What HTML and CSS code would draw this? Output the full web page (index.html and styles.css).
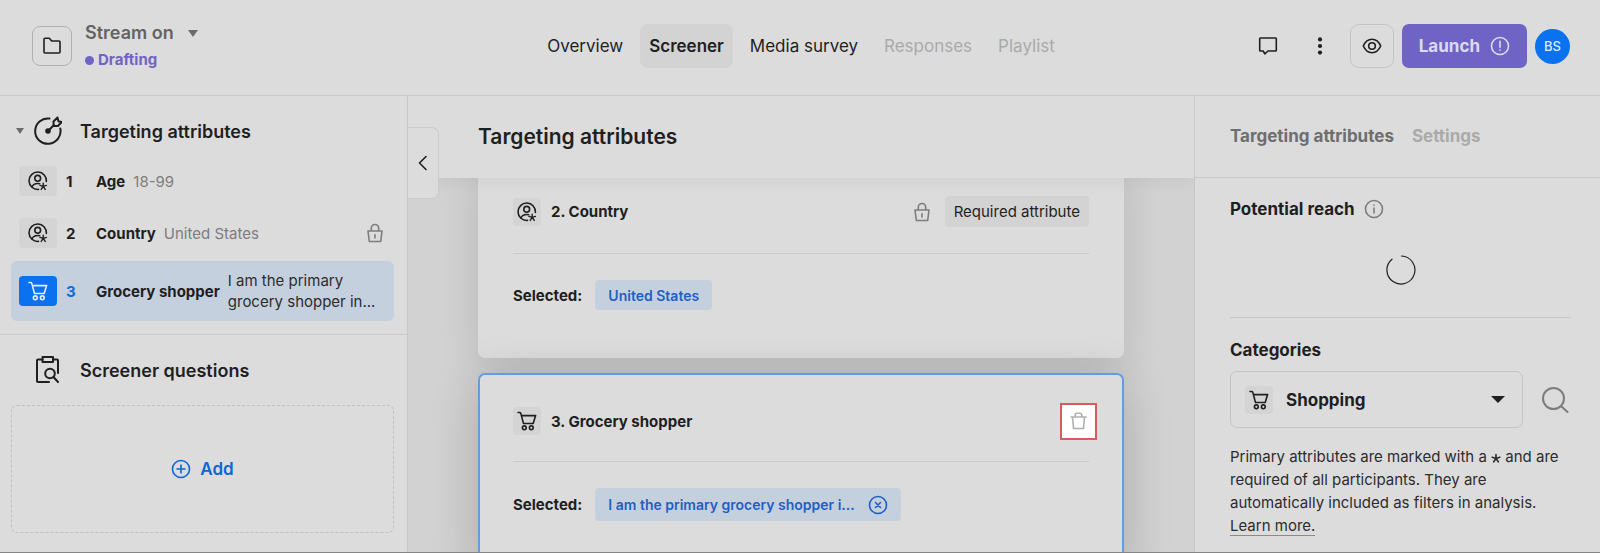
FILE: index.html
```html
<!DOCTYPE html>
<html lang="en">
<head>
    <meta charset="UTF-8">
    <meta name="viewport" content="width=device-width, initial-scale=1.0">
    <title>Stream on - Screener</title>
    <link rel="stylesheet" href="styles.css">
</head>
<body>
    <!-- icons used more than once -->
    <svg class="sprite" aria-hidden="true">
        <symbol id="icon-person" viewBox="0 0 20 20">
            <path d="M18.400 10.500A8.700 8.700 0 1 0 10.500 18.400"/>
            <circle cx="9.700" cy="7.300" r="2.900"/>
            <path d="M4 15.800c1-2.300 3-3.300 5.700-3.300.8 0 1.400.1 2 .3"/>
            <path class="thin" d="M15.200 15.400v-3.200M15.200 15.400l3.200-1M15.200 15.400l2 3M15.200 15.400l-2 3M15.200 15.400l-3.200-1"/>
        </symbol>
        <symbol id="icon-cart" viewBox="0 0 20 20">
            <path d="M1 1.500h1.600c.6 0 1 .3 1.200.9l2.700 10.100h9.700l2.400-7.900H4.400"/>
            <circle cx="7.300" cy="16.800" r="1.900"/>
            <circle cx="14.300" cy="16.800" r="1.900"/>
        </symbol>
        <symbol id="icon-lock" viewBox="0 0 18 20">
            <path d="M2 8h14l-1.300 10.500H3.300zM5.300 8V5.200a3.700 3.700 0 0 1 7.400 0V8M9 11.800v3.200"/>
        </symbol>
    </svg>

    <div class="app">
        <header class="topbar">
            <div class="project">
                <button class="folder-btn" aria-label="Projects">
                    <svg width="20" height="20" viewBox="0 0 20 20"><path d="M2 3.200q0-1 1-1h4.300l2.400 2.800H17q1 0 1 1v10q0 1-1 1H3q-1 0-1-1z"/></svg>
                </button>
                <div>
                    <button class="project-name">Stream on <span class="caret"></span></button>
                    <div class="project-status">Drafting</div>
                </div>
            </div>

            <nav class="tabs">
                <a href="#overview">Overview</a>
                <a href="#screener" class="active">Screener</a>
                <a href="#survey">Media survey</a>
                <a href="#responses" class="disabled">Responses</a>
                <a href="#playlist" class="disabled">Playlist</a>
            </nav>

            <div class="actions">
                <button class="icon-btn" aria-label="Comments">
                    <svg width="20" height="20" viewBox="0 0 20 20"><path d="M2.500 2h15q.8 0 .8.800v11.400q0 .8-.8.800H10l-3.200 2.800L5.200 15H2.500q-.8 0-.8-.8V2.800q0-.8.800-.8z"/></svg>
                </button>
                <button class="icon-btn" aria-label="More">
                    <svg class="solid" width="20" height="20" viewBox="0 0 20 20"><circle cx="10" cy="3.400" r="2.100"/><circle cx="10" cy="10" r="2.100"/><circle cx="10" cy="16.600" r="2.100"/></svg>
                </button>
                <button class="icon-btn outlined" aria-label="Preview">
                    <svg width="20" height="20" viewBox="0 0 20 20"><path d="M1.300 10C3.200 5.700 6.200 3.300 10 3.300s6.800 2.400 8.700 6.700c-1.900 4.300-4.900 6.700-8.700 6.700S3.200 14.300 1.300 10z"/><circle cx="10" cy="10" r="3.300"/></svg>
                </button>
                <button class="launch-btn">
                    Launch
                    <svg width="20" height="20" viewBox="0 0 20 20"><circle cx="10" cy="10" r="8.500"/><path d="M10 5.200v6M10 14v.3"/></svg>
                </button>
                <button class="avatar">BS</button>
            </div>
        </header>

        <aside class="sidebar">
            <section class="group">
                <h2 class="group-title">
                    <span class="caret small"></span>
                    <svg width="28" height="30" viewBox="0 0 28 30">
                        <path d="M15.500 2.500A12.700 12.700 0 1 0 26.300 12.500"/>
                        <circle class="dot" cx="14" cy="15" r="1.800"/>
                        <path d="M14 15l6-6M19.500 9.800V5.500L23.500 1.500l.9 3.700 3.400.8-3.900 4z"/>
                    </svg>
                    Targeting attributes
                </h2>
                <ul class="attributes">
                    <li class="attribute">
                        <span class="badge"><svg width="20" height="20"><use href="#icon-person"/></svg></span>
                        <span class="number">1</span>
                        <span class="name">Age</span>
                        <span class="value">18-99</span>
                    </li>
                    <li class="attribute">
                        <span class="badge"><svg width="20" height="20"><use href="#icon-person"/></svg></span>
                        <span class="number">2</span>
                        <span class="name">Country</span>
                        <span class="value">United States</span>
                        <svg class="lock" width="18" height="20"><use href="#icon-lock"/></svg>
                    </li>
                    <li class="attribute selected">
                        <span class="badge"><svg width="20" height="20"><use href="#icon-cart"/></svg></span>
                        <span class="number">3</span>
                        <span class="name">Grocery shopper</span>
                        <span class="value">I am the primary grocery shopper in...</span>
                    </li>
                </ul>
            </section>

            <section class="group">
                <h2 class="group-title">
                    <span class="caret small hidden"></span>
                    <svg width="28" height="30" viewBox="0 0 28 30">
                        <path d="M8.500 4.500H4q-1 0-1 1V26q0 1 1 1h11M19 4.500h4q1 0 1 1V18"/>
                        <path d="M8.500 2h10.500v5H8.500z"/>
                        <circle cx="16" cy="18.500" r="4.800"/>
                        <path d="M19.500 22l4.500 5"/>
                    </svg>
                    Screener questions
                </h2>
                <button class="add-btn">
                    <svg width="20" height="20" viewBox="0 0 20 20"><circle cx="10" cy="10" r="8.500"/><path d="M10 6v8M6 10h8"/></svg>
                    Add
                </button>
            </section>
        </aside>

        <main class="content">
            <button class="collapse-btn" aria-label="Collapse sidebar">
                <svg width="12" height="18" viewBox="0 0 12 18"><path d="M9 2.500L2.500 9 9 15.500"/></svg>
            </button>
            <h1 class="content-title">Targeting attributes</h1>

            <div class="cards">
                <article class="card">
                    <div class="card-header">
                        <span class="badge square"><svg width="20" height="20"><use href="#icon-person"/></svg></span>
                        <h3>2. Country</h3>
                        <svg class="lock" width="18" height="20"><use href="#icon-lock"/></svg>
                        <span class="tag">Required attribute</span>
                    </div>
                    <div class="card-body">
                        <span class="label">Selected:</span>
                        <span class="chip">United States</span>
                    </div>
                </article>

                <article class="card current">
                    <div class="card-header">
                        <span class="badge square"><svg width="20" height="20"><use href="#icon-cart"/></svg></span>
                        <h3>3. Grocery shopper</h3>
                        <button class="delete-btn" aria-label="Delete attribute">
                            <svg width="17" height="20" viewBox="0 0 17 20"><path d="M1 6h15M2.500 6l1 11.500h10l1-11.500M5 5.500q0-3.200 2-3.200h3q2 0 2 3.200"/></svg>
                        </button>
                    </div>
                    <div class="card-body">
                        <span class="label">Selected:</span>
                        <span class="chip removable">
                            I am the primary grocery shopper i...
                            <button class="remove-btn" aria-label="Remove">
                                <svg width="20" height="20" viewBox="0 0 20 20"><circle cx="10" cy="10" r="8.500"/><path d="M7.500 7.500l5 5M12.500 7.500l-5 5"/></svg>
                            </button>
                        </span>
                    </div>
                </article>
            </div>
        </main>

        <aside class="panel">
            <nav class="panel-tabs">
                <a href="#attributes" class="active">Targeting attributes</a>
                <a href="#settings">Settings</a>
            </nav>

            <section class="reach">
                <h2>
                    Potential reach
                    <svg width="20" height="20" viewBox="0 0 20 20"><circle cx="10" cy="10" r="8.500"/><path d="M10 9v5M10 6v.2"/></svg>
                </h2>
                <svg class="spinner" width="30" height="30" viewBox="0 0 30 30"><path d="M15.500 1A14 14 0 1 1 6 4.200"/></svg>
            </section>

            <section class="categories">
                <label for="category">Categories</label>
                <div class="category-row">
                    <div class="select-box">
                        <span class="badge square"><svg width="20" height="20"><use href="#icon-cart"/></svg></span>
                        <select id="category">
                            <option>Shopping</option>
                        </select>
                        <span class="caret dark"></span>
                    </div>
                    <button class="search-btn" aria-label="Search categories">
                        <svg width="28" height="28" viewBox="0 0 28 28"><circle cx="12.500" cy="12.500" r="10.500"/><path d="M20 20l6.500 6"/></svg>
                    </button>
                </div>
                <p>
                    Primary attributes are marked with a
                    <svg class="star" width="10" height="10" viewBox="0 0 10 10" role="img" aria-label="star"><path d="M5 5.500V1.500M5 5.500l3.800-1.200M5 5.500l2.300 3.300M5 5.500L2.700 8.800M5 5.500L1.200 4.300"/></svg>
                    and are required of all participants. They are automatically included as filters in analysis.
                    <a href="#learn">Learn more.</a>
                </p>
            </section>
        </aside>
    </div>
</body>
</html>
```

FILE: styles.css
```css
* {
    box-sizing: border-box;
    margin: 0;
    padding: 0;
}

body {
    font-family: Inter, "Liberation Sans", sans-serif;
    font-size: 15px;
    color: #1f1f1f;
    background-color: #dcdcdc;
}

button, select {
    font: inherit;
    color: inherit;
    background: none;
    border: none;
    cursor: pointer;
}

a {
    color: inherit;
    text-decoration: none;
}

svg {
    flex-shrink: 0;
    fill: none;
    stroke: currentColor;
    stroke-width: 1.6;
    stroke-linecap: round;
    stroke-linejoin: round;
}

.thin {
    stroke-width: 1.4;
}

.sprite {
    position: absolute;
    width: 0;
    height: 0;
}

.app {
    display: grid;
    grid-template-columns: 407px 1fr 406px;
    grid-template-rows: auto 1fr;
    height: 100vh;
    overflow: hidden;
    border-bottom: 1px solid #858585;
}

.caret {
    display: inline-block;
    border: 5px solid transparent;
    border-top: 7px solid #6b6b6b;
    border-bottom: 0;
}

.caret.small {
    border-width: 6px 4px 0;
}

.caret.dark {
    border-width: 7px 7px 0;
    border-top-color: #1f1f1f;
}

.caret.hidden {
    visibility: hidden;
}

/* Top bar */
.topbar {
    grid-column: 1 / -1;
    display: grid;
    grid-template-columns: 1fr auto 1fr;
    align-items: center;
    padding: 19px 30px 22px 32px;
    border-bottom: 1px solid #c8c8c8;
}

.project {
    display: flex;
    align-items: center;
    gap: 13px;
}

.folder-btn {
    display: grid;
    place-items: center;
    width: 40px;
    height: 40px;
    border: 1px solid #b0b0b0;
    border-radius: 8px;
}

.project-name {
    display: flex;
    align-items: center;
    gap: 14px;
    font-size: 18px;
    font-weight: 600;
    line-height: 28px;
    color: #636363;
}

.project-status {
    display: flex;
    align-items: center;
    gap: 4px;
    font-weight: 700;
    line-height: 26px;
    color: #6f63c6;
}

.project-status::before {
    content: "";
    width: 9px;
    height: 9px;
    border-radius: 50%;
    background-color: #6f63c6;
}

.tabs {
    display: flex;
    gap: 8px;
    font-size: 17px;
    line-height: 44px;
}

.tabs a {
    padding: 0 9px;
    border-radius: 8px;
}

.tabs .active {
    font-weight: 600;
    background-color: #d3d3d3;
}

.tabs .disabled {
    color: #aaaaaa;
}

.actions {
    display: flex;
    align-items: center;
    justify-content: flex-end;
    gap: 8px;
}

.icon-btn {
    display: grid;
    place-items: center;
    width: 44px;
    height: 44px;
}

.icon-btn.outlined {
    border: 1px solid #c4c4c4;
    border-radius: 9px;
}

.solid {
    fill: currentColor;
    stroke: none;
}

.launch-btn {
    display: flex;
    align-items: center;
    gap: 10px;
    height: 44px;
    padding: 0 17px;
    border-radius: 7px;
    font-size: 17px;
    font-weight: 700;
    color: #dcdaf0;
    background-color: #6f63c6;
}

.avatar {
    width: 35px;
    height: 35px;
    border-radius: 50%;
    font-size: 13px;
    font-weight: 500;
    color: #dcebff;
    background-color: #0a72ef;
}

/* Sidebar */
.group {
    padding: 17px 13px 13px 11px;
    border-bottom: 1px solid #cbcbcb;
}

.group:last-child {
    border-bottom: none;
}

.group-title {
    display: flex;
    align-items: center;
    gap: 10px;
    height: 36px;
    margin-bottom: 8px;
    padding-left: 5px;
    font-size: 18px;
    font-weight: 600;
}

.group-title svg {
    stroke-width: 2;
    margin-right: 8px;
}

.group-title .dot {
    fill: currentColor;
}

.attributes {
    display: grid;
    gap: 4px;
    list-style: none;
}

.attribute {
    display: flex;
    align-items: center;
    min-height: 48px;
    padding: 0 8px;
    border-radius: 6px;
}

.badge {
    display: grid;
    flex-shrink: 0;
    place-items: center;
    width: 38px;
    height: 30px;
    border-radius: 4px;
    background-color: #d4d4d4;
}

.badge.square {
    width: 28px;
    height: 28px;
}

.number {
    flex-shrink: 0;
    width: 30px;
    margin-left: 9px;
    font-weight: 700;
}

.name {
    flex-shrink: 0;
    margin-right: 8px;
    font-weight: 700;
}

.value {
    flex: 1;
    line-height: 21px;
    color: #7d7d7d;
}

.lock {
    color: #7d7d7d;
    margin-right: 2px;
}

.attribute.selected {
    min-height: 60px;
    background-color: #c5d0df;
}

.selected .badge {
    color: #e2edfc;
    background-color: #0a72ef;
}

.selected .number {
    color: #0a6be0;
}

.selected .value {
    color: #2c2c2c;
}

.add-btn {
    display: flex;
    align-items: center;
    justify-content: center;
    gap: 9px;
    width: 100%;
    height: 128px;
    margin-top: 17px;
    border: 1px dashed #c0c0c0;
    border-radius: 6px;
    font-size: 17px;
    font-weight: 600;
    color: #0b66d8;
}

/* Content */
.content {
    position: relative;
    min-height: 0;
    overflow: hidden;
    border-left: 1px solid #c8c8c8;
    background-color: #d2d2d2;
}

.collapse-btn {
    position: absolute;
    z-index: 2;
    top: 31px;
    left: 0;
    display: grid;
    place-items: center;
    width: 31px;
    height: 72px;
    border: 1px solid #cbcbcb;
    border-left: none;
    border-radius: 0 7px 7px 0;
    background-color: #dcdcdc;
}

.content-title {
    position: relative;
    z-index: 1;
    padding: 0 70px;
    font-size: 21px;
    font-weight: 600;
    line-height: 82px;
    background-color: #dcdcdc;
    box-shadow: 0 4px 16px rgba(0, 0, 0, 0.06);
}

/* the list is scrolled a little under the title */
.cards {
    display: grid;
    gap: 15px;
    margin-top: -16px;
    padding: 0 70px;
}

.card {
    padding: 0 33px 20px;
    border: 2px solid transparent;
    border-radius: 7px;
    background-color: #dcdcdc;
    box-shadow: 0 8px 40px rgba(0, 0, 0, 0.13);
}

.card.current {
    border-color: #629ddf;
    box-shadow: 0 8px 48px rgba(0, 0, 0, 0.2);
}

.card-header {
    display: flex;
    align-items: center;
    padding: 32px 0 26px;
    border-bottom: 1px solid #cbcbcb;
}

.card-header h3 {
    flex: 1;
    margin-left: 10px;
    font-size: 15px;
    font-weight: 700;
}

.tag {
    margin-left: 12px;
    padding: 0 9px;
    border-radius: 4px;
    line-height: 31px;
    background-color: #d3d3d3;
}

.delete-btn {
    display: grid;
    place-items: center;
    width: 37px;
    height: 37px;
    margin: -5px -8px -5px 0;
    border: 2px solid #d45c5c;
    color: #b0b0b0;
    background-color: #ffffff;
}

.card-body {
    display: flex;
    align-items: center;
    gap: 13px;
    padding: 26px 0;
}

.label {
    font-weight: 700;
}

.chip {
    display: flex;
    align-items: center;
    gap: 13px;
    min-height: 30px;
    padding: 0 13px;
    border-radius: 4px;
    font-size: 14px;
    font-weight: 600;
    color: #1f5fc4;
    background-color: #c5d0df;
}

.chip.removable {
    min-height: 33px;
}

.remove-btn {
    display: flex;
}

/* Right panel */
.panel {
    border-left: 1px solid #c8c8c8;
}

.panel-tabs {
    display: flex;
    gap: 18px;
    padding: 0 35px;
    border-bottom: 1px solid #c8c8c8;
    font-size: 17px;
    font-weight: 700;
    line-height: 81px;
    color: #aaaaaa;
}

.panel-tabs .active {
    color: #6e6e6e;
}

.reach {
    margin: 0 29px 0 35px;
    padding: 17px 0 32px;
    border-bottom: 1px solid #c8c8c8;
}

.reach h2 {
    display: flex;
    align-items: center;
    gap: 9px;
    font-size: 17px;
    font-weight: 700;
    line-height: 28px;
}

.reach h2 svg {
    color: #7d7d7d;
}

.spinner {
    display: block;
    margin: 32px auto 0;
    stroke-width: 1.2;
}

.categories {
    padding: 18px 29px 0 35px;
}

.categories label {
    display: block;
    font-size: 17px;
    font-weight: 700;
    line-height: 28px;
}

.category-row {
    display: flex;
    align-items: center;
    gap: 18px;
    margin: 7px 0 17px;
    padding-right: 2px;
}

.select-box {
    display: flex;
    flex: 1;
    align-items: center;
    height: 57px;
    padding: 0 17px 0 14px;
    border: 1px solid #c4c4c4;
    border-radius: 7px;
}

.select-box select {
    flex: 1;
    appearance: none;
    height: 40px;
    margin-left: 13px;
    font-size: 17px;
    font-weight: 700;
}

.search-btn {
    display: flex;
    color: #7d7d7d;
}

.search-btn svg {
    stroke-width: 2;
}

.categories p {
    line-height: 23px;
    color: #2c2c2c;
}

.categories p a {
    border-bottom: 1px solid #8a8a8a;
}

.star {
    vertical-align: -1px;
}
```
